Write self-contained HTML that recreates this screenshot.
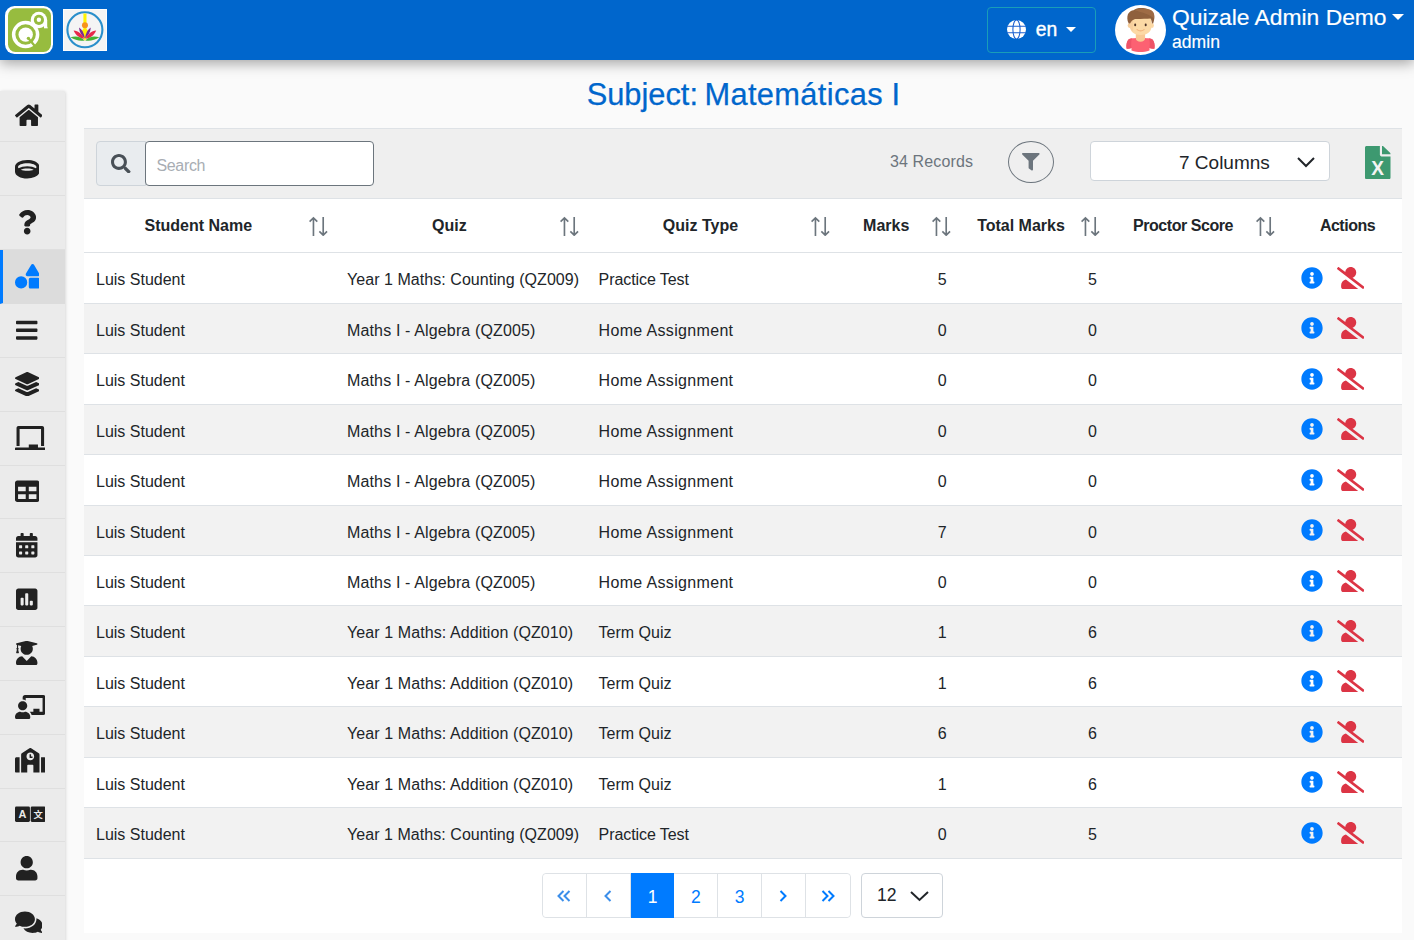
<!DOCTYPE html>
<html lang="en"><head><meta charset="utf-8"><title>Subject: Matemáticas I</title>
<style>
html,body{margin:0;padding:0}
body{width:1414px;height:940px;overflow:hidden;background:#fafafa;font-family:"Liberation Sans",sans-serif;color:#212529;position:relative}
#header{position:absolute;left:0;top:0;width:1414px;height:60px;background:#0066cc;box-shadow:0 3px 13px rgba(0,0,0,.37);color:#fff}
.logo1{position:absolute;left:5px;top:6px;width:48px;height:48px}
.logo2{position:absolute;left:63px;top:9px;width:44px;height:42px}
.lang{position:absolute;left:987px;top:7px;width:109px;height:45.600px;border:1px solid #199db8;border-radius:4px;box-sizing:border-box}
.lang svg{position:absolute;left:19px;top:12.200px}
.lang span{position:absolute;left:47.700px;top:10.100px;font-size:19.300px;line-height:24px;color:#fff;-webkit-text-stroke:.4px #fff}
.caret{display:inline-block;width:0;height:0;border-left:5.500px solid transparent;border-right:5.500px solid transparent;border-top:5.500px solid #fff}
.lang .caret{position:absolute;left:78px;top:19px;border-left-width:5.250px;border-right-width:5.250px;border-top-width:5.400px}
.avatar{position:absolute;left:1115px;top:5px;width:51px;height:50px}
.uname{position:absolute;left:1172px;top:3px;font-size:22.850px;line-height:28px;white-space:nowrap;-webkit-text-stroke:.2px #fff}
.uname .caret{position:absolute;left:220px;top:10.800px;border-left-width:6.200px;border-right-width:6.200px;border-top-width:6.200px}
.urole{position:absolute;left:1172px;top:31px;font-size:17.600px;line-height:22px;-webkit-text-stroke:.15px #fff}
#title{position:absolute;left:586.700px;top:75.200px;margin:0;white-space:nowrap;font-weight:normal;font-size:30.800px;line-height:40px;color:#0066cc;-webkit-text-stroke:.25px #0066cc}
#sidebar{position:absolute;left:0;top:91px;width:65px;height:860px;background:#ebebeb;border-top-right-radius:3px;box-shadow:1px 0 3px rgba(0,0,0,.12)}
.sitem{position:absolute;left:0;width:65px;height:53.85px;box-sizing:border-box;border-bottom:1px solid #dfdfdf}
.sitem.active{background:#dcdcdc;border-left:3px solid #007bff;border-bottom-color:#dcdcdc;height:53.400px}
.sicon{position:absolute;color:#212121;line-height:0}
.sicon.act{color:#007bff}
#card{position:absolute;left:84px;top:128px;width:1318px;height:805px;background:#fff}
#toolbar{position:absolute;left:0;top:0;width:1318px;height:71px;background:#efefef;border-top:1px solid #dee2e6;border-bottom:1px solid #dee2e6;box-sizing:border-box}
#thead{position:absolute;left:0;top:71px;width:1318px;height:54px;border-bottom:1px solid #dee2e6;box-sizing:border-box}
#tbl{position:absolute;left:0;top:0;width:1414px;height:940px}
.addon{position:absolute;left:96px;top:141px;width:50px;height:45px;box-sizing:border-box;background:#e9ecef;border:1px solid #ced4da;border-radius:4px 0 0 4px;display:flex;align-items:center;justify-content:center}
.search{position:absolute;left:145px;top:141px;width:229px;height:45px;box-sizing:border-box;background:#fff;border:1px solid #6c757d;border-radius:4px}
.search span{position:absolute;left:10.500px;top:13.700px;font-size:16px;line-height:20px;color:#a8adb3;letter-spacing:-.35px}
.records{position:absolute;left:890px;top:151px;font-size:16px;line-height:22px;color:#6c757d;white-space:nowrap;letter-spacing:.12px}
.fbtn{position:absolute;left:1008px;top:141px;width:46px;height:42px;box-sizing:border-box;border:1px solid #6c757d;border-radius:50%;display:flex;align-items:center;justify-content:center}
.cols{position:absolute;left:1090px;top:141px;width:240px;height:40px;box-sizing:border-box;background:#fff;border:1px solid #ced4da;border-radius:4px}
.cols .lbl{position:absolute;left:88px;top:9.500px;font-size:19px;line-height:22px;color:#212529}
.cols .chev{position:absolute;left:205px;top:14px}
.excel{position:absolute;left:1365.300px;top:145.700px;line-height:0}
.th{position:absolute;top:215px;transform:translateX(-50%);font-weight:bold;font-size:16px;line-height:22px;white-space:nowrap;color:#212529}
.sorti{position:absolute;top:216px;width:20px;height:20px}
.row{position:absolute;left:84px;width:1318px;height:50.450px;box-sizing:border-box;border-bottom:1px solid #dee2e6;background:#fff}
.row.even{background:#f2f2f2}
.c{position:absolute;top:16px;font-size:16px;line-height:22px;white-space:nowrap;color:#212529}
.c1{left:12px}.c2{left:263px}.c3{left:514.600px}
.c4{left:848.300px;width:20px;text-align:center}.c5{left:998.500px;width:20px;text-align:center}
.ic{position:absolute}
.info{left:1216.700px;top:13.600px;color:#007bff}
.uslash{left:1252.600px;top:13.600px;color:#dc3545}
#pager{position:absolute;left:542px;top:873px;height:45px;display:flex;border:1px solid #dee2e6;border-radius:4px;box-sizing:border-box}
.pg{width:43.800px;height:43px;box-sizing:border-box;border-right:1px solid #dee2e6;display:flex;align-items:center;justify-content:center;color:#007bff;font-size:17.500px;background:#fff;padding-top:3px}
.pg svg{margin-top:-3px}
.pg.last{border-right:0}
.pg.cur{background:#007bff;color:#fff;height:45px;margin-top:-1px;border-right:0;padding-top:4px}
.rpp{position:absolute;left:861px;top:873px;width:82px;height:45px;box-sizing:border-box;border:1px solid #ced4da;border-radius:4px;background:#fff}
.rpp span{position:absolute;left:15px;top:10px;font-size:17.600px;line-height:22px;color:#212529}
.rpp svg{position:absolute;left:47px;top:15.500px}

.pg.first{border-radius:4px 0 0 4px}.pg.last{border-radius:0 4px 4px 0}
.q1{letter-spacing:.05px}.q2{letter-spacing:.145px}.q3{letter-spacing:.09px}
.t1{letter-spacing:-.08px}.t2{letter-spacing:.33px}
.h6{letter-spacing:-.45px}.h7{letter-spacing:-.5px}

.w1{margin-right:-2.100px}.w2{letter-spacing:.36px}

</style></head>
<body>
<div id="sidebar"></div>
<div class="sitem" style="top:88.60px"></div><div class="sicon" style="left:14.70px;top:102.80px"><svg viewBox="0 0 576 512" width="27.5625" height="24.5" style=""><path fill="currentColor" d="M280.37 148.26L96 300.11V464a16 16 0 0 0 16 16l112.06-.29a16 16 0 0 0 15.92-16V368a16 16 0 0 1 16-16h64a16 16 0 0 1 16 16v95.64a16 16 0 0 0 16 16.05L464 480a16 16 0 0 0 16-16V300L295.67 148.26a12.19 12.19 0 0 0-15.3 0zM571.6 251.47L488 182.56V44.05a12 12 0 0 0-12-12h-56a12 12 0 0 0-12 12v72.61L318.47 43a48 48 0 0 0-61 0L4.34 251.47a12 12 0 0 0-1.6 16.9l25.5 31A12 12 0 0 0 45.15 301l235.22-193.74a12.19 12.19 0 0 1 15.3 0L530.9 301a12 12 0 0 0 16.9-1.6l25.5-31a12 12 0 0 0-1.7-16.93z"/></svg></div>
<div class="sitem" style="top:142.45px"></div><div class="sicon" style="left:14.70px;top:156.60px"><svg viewBox="0 0 512 512" width="24.5" height="24.5" style=""><path fill="currentColor" d="M256 64C110.06 64 0 125.91 0 208v98.130C0 384.480 114.620 448 256 448s256-63.520 256-141.870V208c0-82.090-110.060-144-256-144zm0 64c106.040 0 192 35.820 192 80 0 9.260-3.970 18.120-10.910 26.390C392.150 208.210 328.230 192 256 192s-136.150 16.210-181.090 42.390C67.970 226.120 64 217.260 64 208c0-44.180 85.960-80 192-80zM120.430 264.640C155.040 249.930 201.640 240 256 240s100.960 9.930 135.570 24.640C356.840 279.070 308.930 288 256 288s-100.840-8.930-135.570-23.360z"/></svg></div>
<div class="sitem" style="top:196.30px"></div><div class="sicon" style="left:17.76px;top:210.40px"><svg viewBox="0 0 384 512" width="18.375" height="24.5" style=""><path fill="currentColor" d="M202.021 0C122.202 0 70.503 32.703 29.914 91.026c-7.363 10.580-5.093 25.086 5.178 32.874l43.138 32.709c10.373 7.865 25.132 6.026 33.253-4.148 25.049-31.381 43.630-49.449 82.757-49.449 30.764 0 68.816 19.799 68.816 49.631 0 22.552-18.617 34.134-48.993 51.164-35.423 19.860-82.299 44.576-82.299 106.405V320c0 13.255 10.745 24 24 24h72.471c13.255 0 24-10.745 24-24v-5.773c0-42.860 125.268-44.645 125.268-160.627C377.504 66.256 286.902 0 202.021 0zM192 373.459c-38.196 0-69.271 31.075-69.271 69.271 0 38.195 31.075 69.270 69.271 69.270s69.271-31.075 69.271-69.271-31.075-69.270-69.271-69.270z"/></svg></div>
<div class="sitem active" style="top:250.15px"></div><div class="sicon act" style="left:14.70px;top:264.20px"><svg viewBox="0 0 512 512" width="24.5" height="24.5" style=""><path fill="currentColor" d="M128,256A128,128,0,1,0,256,384,128,128,0,0,0,128,256Zm379-54.860L400.070,18.290a37.260,37.260,0,0,0-64.140,0L229,201.140C214.760,225.520,232.580,256,261.090,256H474.910C503.420,256,521.240,225.520,507,201.140ZM480,288H320a32,32,0,0,0-32,32V480a32,32,0,0,0,32,32H480a32,32,0,0,0,32-32V320A32,32,0,0,0,480,288Z"/></svg></div>
<div class="sitem" style="top:304.00px"></div><div class="sicon" style="left:16.23px;top:318.00px"><svg viewBox="0 0 448 512" width="21.4375" height="24.5" style=""><path fill="currentColor" d="M16 132h416c8.837 0 16-7.163 16-16V76c0-8.837-7.163-16-16-16H16C7.163 60 0 67.163 0 76v40c0 8.837 7.163 16 16 16zm0 160h416c8.837 0 16-7.163 16-16v-40c0-8.837-7.163-16-16-16H16c-8.837 0-16 7.163-16 16v40c0 8.837 7.163 16 16 16zm0 160h416c8.837 0 16-7.163 16-16v-40c0-8.837-7.163-16-16-16H16c-8.837 0-16 7.163-16 16v40c0 8.837 7.163 16 16 16z"/></svg></div>
<div class="sitem" style="top:357.85px"></div><div class="sicon" style="left:14.70px;top:371.80px"><svg viewBox="0 0 512 512" width="24.5" height="24.5" style=""><path fill="currentColor" d="M12.410 148.020l232.940 105.670c6.800 3.090 14.490 3.090 21.290 0l232.940-105.670c16.550-7.510 16.550-32.520 0-40.030L266.650 2.310a25.607 25.607 0 0 0-21.290 0L12.410 107.980c-16.550 7.510-16.550 32.530 0 40.040zm487.180 88.280l-58.090-26.330-161.640 73.270c-7.560 3.430-15.590 5.170-23.860 5.170s-16.290-1.740-23.860-5.170L70.510 209.970l-58.100 26.330c-16.550 7.500-16.550 32.500 0 40l232.940 105.590c6.800 3.080 14.490 3.080 21.290 0L499.590 276.300c16.550-7.500 16.550-32.500 0-40zm0 127.800l-57.870-26.230-161.860 73.370c-7.560 3.430-15.590 5.170-23.860 5.170s-16.290-1.740-23.860-5.170L70.290 337.870 12.410 364.100c-16.550 7.500-16.550 32.500 0 40l232.940 105.590c6.800 3.080 14.490 3.080 21.290 0L499.590 404.100c16.550-7.500 16.550-32.500 0-40z"/></svg></div>
<div class="sitem" style="top:411.70px"></div><div class="sicon" style="left:14.70px;top:425.60px"><svg viewBox="0 0 640 512" width="30.625" height="24.5" style=""><path fill="currentColor" d="M96 64h448v352h64V40c0-22.060-17.940-40-40-40H72C49.940 0 32 17.940 32 40v376h64V64zm528 384H480v-64H288v64H16c-8.840 0-16 7.160-16 16v32c0 8.840 7.160 16 16 16h608c8.840 0 16-7.160 16-16v-32c0-8.840-7.160-16-16-16z"/></svg></div>
<div class="sitem" style="top:465.55px"></div><div class="sicon" style="left:14.70px;top:479.40px"><svg viewBox="0 0 512 512" width="24.5" height="24.5" style=""><path fill="currentColor" d="M464 32H48C21.490 32 0 53.490 0 80v352c0 26.510 21.490 48 48 48h416c26.510 0 48-21.490 48-48V80c0-26.510-21.490-48-48-48zM224 416H64v-96h160v96zm0-160H64v-96h160v96zm224 160H288v-96h160v96zm0-160H288v-96h160v96z"/></svg></div>
<div class="sitem" style="top:519.40px"></div><div class="sicon" style="left:16.23px;top:533.20px"><svg viewBox="0 0 448 512" width="21.4375" height="24.5" style=""><path fill="currentColor" d="M0 464c0 26.500 21.500 48 48 48h352c26.500 0 48-21.500 48-48V192H0v272zm320-196c0-6.600 5.400-12 12-12h40c6.600 0 12 5.400 12 12v40c0 6.600-5.400 12-12 12h-40c-6.600 0-12-5.400-12-12v-40zm0 128c0-6.600 5.400-12 12-12h40c6.600 0 12 5.400 12 12v40c0 6.600-5.400 12-12 12h-40c-6.600 0-12-5.400-12-12v-40zM192 268c0-6.600 5.400-12 12-12h40c6.600 0 12 5.400 12 12v40c0 6.600-5.400 12-12 12h-40c-6.600 0-12-5.400-12-12v-40zm0 128c0-6.600 5.400-12 12-12h40c6.600 0 12 5.400 12 12v40c0 6.600-5.400 12-12 12h-40c-6.600 0-12-5.400-12-12v-40zM64 268c0-6.600 5.400-12 12-12h40c6.600 0 12 5.400 12 12v40c0 6.600-5.400 12-12 12H76c-6.600 0-12-5.400-12-12v-40zm0 128c0-6.600 5.400-12 12-12h40c6.600 0 12 5.400 12 12v40c0 6.600-5.400 12-12 12H76c-6.600 0-12-5.400-12-12v-40zM400 64h-48V16c0-8.800-7.200-16-16-16h-32c-8.800 0-16 7.200-16 16v48H160V16c0-8.800-7.200-16-16-16h-32c-8.800 0-16 7.200-16 16v48H48C21.500 64 0 85.500 0 112v48h448v-48c0-26.500-21.500-48-48-48z"/></svg></div>
<div class="sitem" style="top:573.25px"></div><div class="sicon" style="left:16.23px;top:587.00px"><svg viewBox="0 0 448 512" width="21.4375" height="24.5" style=""><path fill="currentColor" d="M400 32H48C21.500 32 0 53.500 0 80v352c0 26.500 21.500 48 48 48h352c26.500 0 48-21.500 48-48V80c0-26.500-21.500-48-48-48zM160 368c0 8.840-7.160 16-16 16h-32c-8.840 0-16-7.160-16-16V240c0-8.840 7.160-16 16-16h32c8.840 0 16 7.160 16 16v128zm96 0c0 8.840-7.160 16-16 16h-32c-8.840 0-16-7.160-16-16V144c0-8.840 7.160-16 16-16h32c8.840 0 16 7.160 16 16v224zm96 0c0 8.840-7.160 16-16 16h-32c-8.840 0-16-7.160-16-16v-64c0-8.840 7.160-16 16-16h32c8.840 0 16 7.160 16 16v64z"/></svg></div>
<div class="sitem" style="top:627.10px"></div><div class="sicon" style="left:16.23px;top:640.80px"><svg viewBox="0 0 448 512" width="21.4375" height="24.5" style=""><path fill="currentColor" d="M319.400 320.600L224 416l-95.400-95.400C57.100 323.700 0 382.200 0 454.400v9.600c0 26.500 21.500 48 48 48h352c26.500 0 48-21.500 48-48v-9.600c0-72.200-57.100-130.700-128.600-133.800zM13.600 79.800l6.400 1.500v58.400c-7 4.200-12 11.500-12 20.300 0 8.400 4.600 15.400 11.100 19.700L3.500 242c-1.700 6.900 2.100 14 7.600 14h41.800c5.500 0 9.300-7.100 7.600-14l-15.600-62.300C51.400 175.400 56 168.400 56 160c0-8.800-5-16.100-12-20.300V87.100l66 15.900c-8.600 17.200-14 36.400-14 57 0 70.700 57.300 128 128 128s128-57.300 128-128c0-20.600-5.300-39.800-14-57l96.300-23.200c18.200-4.400 18.200-27.100 0-31.500l-190.400-46c-13-3.100-26.700-3.100-39.700 0L13.600 48.200c-18.100 4.400-18.100 27.200 0 31.600z"/></svg></div>
<div class="sitem" style="top:680.95px"></div><div class="sicon" style="left:14.70px;top:694.60px"><svg viewBox="0 0 640 512" width="30.625" height="24.5" style=""><path fill="currentColor" d="M208 352c-2.390 0-4.780.350-7.060 1.090C187.980 357.300 174.350 360 160 360c-14.350 0-27.980-2.700-40.950-6.910-2.280-.740-4.660-1.090-7.050-1.090C49.940 352-.330 402.480 0 464.620.140 490.880 21.730 512 48 512h224c26.270 0 47.860-21.120 48-47.380.330-62.140-49.940-112.620-112-112.620zm-48-32c53.020 0 96-42.980 96-96s-42.980-96-96-96-96 42.980-96 96 42.980 96 96 96zM592 0H208c-26.470 0-48 22.250-48 49.590V96c23.420 0 45.100 6.780 64 17.800V64h352v288h-64v-64H384v64h-76.240c19.100 16.690 33.120 38.730 39.690 64H592c26.470 0 48-22.250 48-49.590V49.590C640 22.250 618.470 0 592 0z"/></svg></div>
<div class="sitem" style="top:734.80px"></div><div class="sicon" style="left:14.70px;top:748.40px"><svg viewBox="0 0 640 512" width="30.625" height="24.5" style=""><path fill="currentColor" d="M0 224v272c0 8.840 7.160 16 16 16h80V192H32c-17.670 0-32 14.330-32 32zm360-48h-24v-40c0-4.420-3.580-8-8-8h-16c-4.420 0-8 3.580-8 8v64c0 4.420 3.580 8 8 8h48c4.420 0 8-3.580 8-8v-16c0-4.420-3.580-8-8-8zm137.750-63.960l-160-106.670a32.020 32.020 0 0 0-35.500 0l-160 106.670A32.002 32.002 0 0 0 128 138.660V512h128V368c0-8.840 7.160-16 16-16h96c8.840 0 16 7.160 16 16v144h128V138.670c0-10.700-5.350-20.700-14.250-26.630zM320 256c-44.180 0-80-35.820-80-80s35.820-80 80-80 80 35.820 80 80-35.820 80-80 80zm288-64h-64v320h80c8.840 0 16-7.160 16-16V224c0-17.670-14.330-32-32-32z"/></svg></div>
<div class="sitem" style="top:788.65px"></div><div class="sicon" style="left:14.70px;top:802.20px"><svg viewBox="0 0 640 512" width="30.625" height="24.5"><rect x="0" y="96" width="312" height="320" rx="28" fill="#212121"/><rect x="328" y="96" width="312" height="320" rx="28" fill="#212121"/><text x="156" y="338" font-family="Liberation Sans, sans-serif" font-weight="bold" font-size="228" fill="#ebebeb" text-anchor="middle">A</text><text x="484" y="328" font-family="Noto Sans CJK SC, sans-serif" font-weight="bold" font-size="195" fill="#ebebeb" text-anchor="middle">文</text></svg></div>
<div class="sitem" style="top:842.50px"></div><div class="sicon" style="left:16.23px;top:856.00px"><svg viewBox="0 0 448 512" width="21.4375" height="24.5" style=""><path fill="currentColor" d="M224 256c70.700 0 128-57.300 128-128S294.700 0 224 0 96 57.300 96 128s57.300 128 128 128zm89.600 32h-16.700c-22.200 10.200-46.900 16-72.900 16s-50.600-5.800-72.900-16h-16.700C60.200 288 0 348.200 0 422.400V464c0 26.500 21.500 48 48 48h352c26.500 0 48-21.500 48-48v-41.600c0-74.200-60.200-134.400-134.400-134.400z"/></svg></div>
<div class="sitem" style="top:896.35px"></div><div class="sicon" style="left:14.70px;top:909.80px"><svg viewBox="0 0 576 512" width="27.5625" height="24.5" style=""><path fill="currentColor" d="M416 192c0-88.400-93.100-160-208-160S0 103.600 0 192c0 34.300 14.100 65.900 38 92-13.400 30.200-35.500 54.200-35.800 54.500-2.200 2.300-2.800 5.700-1.500 8.700S4.800 352 8 352c36.600 0 66.900-12.300 88.700-25 32.200 15.700 70.300 25 111.300 25 114.900 0 208-71.600 208-160zm122 220c23.900-26 38-57.700 38-92 0-66.900-53.500-124.200-129.300-148.100.900 6.600 1.300 13.300 1.300 20.100 0 105.900-107.700 192-240 192-10.800 0-21.300-.800-31.700-1.900C207.800 439.600 281.800 480 368 480c41 0 79.100-9.200 111.300-25 21.800 12.700 52.100 25 88.700 25 3.200 0 6.100-1.900 7.300-4.800 1.300-2.900.700-6.300-1.500-8.700-.300-.300-22.400-24.200-35.800-54.500z"/></svg></div>
<div id="card">
 <div id="toolbar"></div>
 <div id="thead"></div>
</div>
<div id="tbl">
<div class="addon"><svg viewBox="0 0 512 512" width="19.6" height="19.6" style=""><path fill="#495057" d="M505 442.7L405.3 343c-4.500-4.500-10.600-7-17-7H372c27.600-35.300 44-79.700 44-128C416 93.100 322.900 0 208 0S0 93.100 0 208s93.100 208 208 208c48.300 0 92.700-16.400 128-44v16.300c0 6.400 2.500 12.500 7 17l99.700 99.700c9.400 9.400 24.600 9.400 33.900 0l28.300-28.300c9.400-9.400 9.400-24.600.1-34zM208 336c-70.700 0-128-57.200-128-128 0-70.700 57.200-128 128-128 70.700 0 128 57.200 128 128 0 70.700-57.200 128-128 128z"/></svg></div>
<div class="search"><span>Search</span></div>
<div class="records">34 Records</div>
<div class="fbtn"><svg viewBox="0 0 512 512" width="17.6" height="17.6" style=""><path fill="#6c757d" d="M487.976 0H24.028C2.710 0-8.047 25.866 7.058 40.971L192 225.941V432c0 7.831 3.821 15.170 10.237 19.662l80 55.980C298.020 518.690 320 507.493 320 487.980V225.941l184.947-184.970C520.021 25.896 509.338 0 487.976 0z"/></svg></div>
<div class="cols"><span class="lbl">7 Columns</span><svg class="chev" viewBox="0 0 20 12" width="20" height="12"><path d="M2 2l8 8 8-8" fill="none" stroke="#212529" stroke-width="2"/></svg></div>
<div class="excel"><svg preserveAspectRatio="none" viewBox="0 0 384 512" width="25.5" height="33.3" style=""><path fill="#3d9970" d="M224 136V0H24C10.7 0 0 10.700 0 24v464c0 13.300 10.700 24 24 24h336c13.300 0 24-10.700 24-24V160H248c-13.200 0-24-10.800-24-24zM384 121.900v6.100H256V0h6.100c6.400 0 12.500 2.500 17 7l97.900 98c4.500 4.500 7 10.600 7 16.900z"/><text x="192" y="448" text-anchor="middle" textLength="192" lengthAdjust="spacingAndGlyphs" font-family="Liberation Sans, sans-serif" font-weight="bold" font-size="312" fill="#f4f4f4">X</text></svg></div>
<span class="th h1" style="left:198.3px">Student Name</span><span class="sorti" style="left:308.3px"><svg class="sort" viewBox="0 0 20 20" width="20" height="20"><g fill="none" stroke="#6c757d" stroke-width="1.650" stroke-linejoin="miter"><path d="M5.450 19.900V1.800M1.600 5.650L5.450 1.800 9.300 5.650"/><path d="M15.200 1.100v18.100M11.350 15.350l3.850 3.850 3.850-3.850"/></g></svg></span><span class="th h2" style="left:449.3px">Quiz</span><span class="sorti" style="left:559.3px"><svg class="sort" viewBox="0 0 20 20" width="20" height="20"><g fill="none" stroke="#6c757d" stroke-width="1.650" stroke-linejoin="miter"><path d="M5.450 19.900V1.800M1.600 5.650L5.450 1.800 9.300 5.650"/><path d="M15.200 1.100v18.100M11.350 15.350l3.850 3.850 3.850-3.850"/></g></svg></span><span class="th h3" style="left:700.5px">Quiz Type</span><span class="sorti" style="left:810.3px"><svg class="sort" viewBox="0 0 20 20" width="20" height="20"><g fill="none" stroke="#6c757d" stroke-width="1.650" stroke-linejoin="miter"><path d="M5.450 19.900V1.800M1.600 5.650L5.450 1.800 9.300 5.650"/><path d="M15.200 1.100v18.100M11.350 15.350l3.850 3.850 3.850-3.850"/></g></svg></span><span class="th h4" style="left:886.2px">Marks</span><span class="sorti" style="left:930.9px"><svg class="sort" viewBox="0 0 20 20" width="20" height="20"><g fill="none" stroke="#6c757d" stroke-width="1.650" stroke-linejoin="miter"><path d="M5.450 19.900V1.800M1.600 5.650L5.450 1.800 9.300 5.650"/><path d="M15.200 1.100v18.100M11.350 15.350l3.850 3.850 3.850-3.850"/></g></svg></span><span class="th h5" style="left:1021px">Total Marks</span><span class="sorti" style="left:1080.1px"><svg class="sort" viewBox="0 0 20 20" width="20" height="20"><g fill="none" stroke="#6c757d" stroke-width="1.650" stroke-linejoin="miter"><path d="M5.450 19.900V1.800M1.600 5.650L5.450 1.800 9.300 5.650"/><path d="M15.200 1.100v18.100M11.350 15.350l3.850 3.850 3.850-3.850"/></g></svg></span><span class="th h6" style="left:1183px">Proctor Score</span><span class="sorti" style="left:1254.7px"><svg class="sort" viewBox="0 0 20 20" width="20" height="20"><g fill="none" stroke="#6c757d" stroke-width="1.650" stroke-linejoin="miter"><path d="M5.450 19.900V1.800M1.600 5.650L5.450 1.800 9.300 5.650"/><path d="M15.200 1.100v18.100M11.350 15.350l3.850 3.850 3.850-3.850"/></g></svg></span><span class="th h7" style="left:1347.5px">Actions</span>
<div class="row" style="top:253.30px"><span class="c c1">Luis Student</span><span class="c c2 q1">Year 1 Maths: Counting (QZ009)</span><span class="c c3 t1">Practice Test</span><span class="c c4">5</span><span class="c c5">5</span><span class="ic info"><svg viewBox="0 0 512 512" width="22" height="22" style=""><path fill="currentColor" d="M256 8C119.043 8 8 119.083 8 256c0 136.997 111.043 248 248 248s248-111.003 248-248C504 119.083 392.957 8 256 8zm0 110c23.196 0 42 18.804 42 42s-18.804 42-42 42-42-18.804-42-42 18.804-42 42-42zm56 254c0 6.627-5.373 12-12 12h-88c-6.627 0-12-5.373-12-12v-24c0-6.627 5.373-12 12-12h12v-64h-12c-6.627 0-12-5.373-12-12v-24c0-6.627 5.373-12 12-12h64c6.627 0 12 5.373 12 12v100h12c6.627 0 12 5.373 12 12v24z"/></svg></span><span class="ic uslash"><svg viewBox="0 0 640 512" width="27.5" height="22" style=""><path fill="currentColor" d="M633.8 458.1L362.3 248.3C412.1 230.7 448 183.800 448 128 448 57.300 390.700 0 320 0c-67.100 0-121.500 51.800-126.900 117.400L45.500 3.400C38.500-2 28.500-.8 23 6.200L3.400 31.400c-5.400 7-4.200 17 2.800 22.400l588.400 454.700c7 5.400 17 4.200 22.500-2.800l19.600-25.300c5.400-6.800 4.100-16.900-2.900-22.300zM96 422.400V464c0 26.500 21.500 48 48 48h350.200L207.400 290.300C144.200 301.300 96 356 96 422.400z"/></svg></span></div>
<div class="row even" style="top:303.75px"><span class="c c1">Luis Student</span><span class="c c2 q2">Maths I - Algebra (QZ005)</span><span class="c c3 t2">Home Assignment</span><span class="c c4">0</span><span class="c c5">0</span><span class="ic info"><svg viewBox="0 0 512 512" width="22" height="22" style=""><path fill="currentColor" d="M256 8C119.043 8 8 119.083 8 256c0 136.997 111.043 248 248 248s248-111.003 248-248C504 119.083 392.957 8 256 8zm0 110c23.196 0 42 18.804 42 42s-18.804 42-42 42-42-18.804-42-42 18.804-42 42-42zm56 254c0 6.627-5.373 12-12 12h-88c-6.627 0-12-5.373-12-12v-24c0-6.627 5.373-12 12-12h12v-64h-12c-6.627 0-12-5.373-12-12v-24c0-6.627 5.373-12 12-12h64c6.627 0 12 5.373 12 12v100h12c6.627 0 12 5.373 12 12v24z"/></svg></span><span class="ic uslash"><svg viewBox="0 0 640 512" width="27.5" height="22" style=""><path fill="currentColor" d="M633.8 458.1L362.3 248.3C412.1 230.7 448 183.800 448 128 448 57.300 390.700 0 320 0c-67.100 0-121.500 51.800-126.900 117.400L45.500 3.400C38.500-2 28.500-.8 23 6.200L3.400 31.400c-5.400 7-4.200 17 2.800 22.400l588.400 454.700c7 5.400 17 4.200 22.500-2.800l19.600-25.300c5.400-6.800 4.100-16.900-2.900-22.300zM96 422.400V464c0 26.500 21.500 48 48 48h350.200L207.400 290.300C144.200 301.300 96 356 96 422.400z"/></svg></span></div>
<div class="row" style="top:354.20px"><span class="c c1">Luis Student</span><span class="c c2 q2">Maths I - Algebra (QZ005)</span><span class="c c3 t2">Home Assignment</span><span class="c c4">0</span><span class="c c5">0</span><span class="ic info"><svg viewBox="0 0 512 512" width="22" height="22" style=""><path fill="currentColor" d="M256 8C119.043 8 8 119.083 8 256c0 136.997 111.043 248 248 248s248-111.003 248-248C504 119.083 392.957 8 256 8zm0 110c23.196 0 42 18.804 42 42s-18.804 42-42 42-42-18.804-42-42 18.804-42 42-42zm56 254c0 6.627-5.373 12-12 12h-88c-6.627 0-12-5.373-12-12v-24c0-6.627 5.373-12 12-12h12v-64h-12c-6.627 0-12-5.373-12-12v-24c0-6.627 5.373-12 12-12h64c6.627 0 12 5.373 12 12v100h12c6.627 0 12 5.373 12 12v24z"/></svg></span><span class="ic uslash"><svg viewBox="0 0 640 512" width="27.5" height="22" style=""><path fill="currentColor" d="M633.8 458.1L362.3 248.3C412.1 230.7 448 183.800 448 128 448 57.300 390.700 0 320 0c-67.100 0-121.500 51.800-126.900 117.400L45.500 3.400C38.500-2 28.500-.8 23 6.200L3.400 31.400c-5.400 7-4.200 17 2.800 22.400l588.400 454.700c7 5.400 17 4.200 22.500-2.800l19.600-25.300c5.400-6.800 4.100-16.900-2.900-22.300zM96 422.400V464c0 26.500 21.500 48 48 48h350.200L207.400 290.300C144.200 301.300 96 356 96 422.400z"/></svg></span></div>
<div class="row even" style="top:404.65px"><span class="c c1">Luis Student</span><span class="c c2 q2">Maths I - Algebra (QZ005)</span><span class="c c3 t2">Home Assignment</span><span class="c c4">0</span><span class="c c5">0</span><span class="ic info"><svg viewBox="0 0 512 512" width="22" height="22" style=""><path fill="currentColor" d="M256 8C119.043 8 8 119.083 8 256c0 136.997 111.043 248 248 248s248-111.003 248-248C504 119.083 392.957 8 256 8zm0 110c23.196 0 42 18.804 42 42s-18.804 42-42 42-42-18.804-42-42 18.804-42 42-42zm56 254c0 6.627-5.373 12-12 12h-88c-6.627 0-12-5.373-12-12v-24c0-6.627 5.373-12 12-12h12v-64h-12c-6.627 0-12-5.373-12-12v-24c0-6.627 5.373-12 12-12h64c6.627 0 12 5.373 12 12v100h12c6.627 0 12 5.373 12 12v24z"/></svg></span><span class="ic uslash"><svg viewBox="0 0 640 512" width="27.5" height="22" style=""><path fill="currentColor" d="M633.8 458.1L362.3 248.3C412.1 230.7 448 183.800 448 128 448 57.300 390.700 0 320 0c-67.100 0-121.500 51.800-126.900 117.400L45.500 3.400C38.500-2 28.500-.8 23 6.200L3.400 31.400c-5.400 7-4.200 17 2.800 22.400l588.400 454.700c7 5.400 17 4.200 22.500-2.800l19.600-25.300c5.400-6.800 4.100-16.900-2.900-22.300zM96 422.400V464c0 26.500 21.500 48 48 48h350.200L207.400 290.300C144.200 301.300 96 356 96 422.400z"/></svg></span></div>
<div class="row" style="top:455.10px"><span class="c c1">Luis Student</span><span class="c c2 q2">Maths I - Algebra (QZ005)</span><span class="c c3 t2">Home Assignment</span><span class="c c4">0</span><span class="c c5">0</span><span class="ic info"><svg viewBox="0 0 512 512" width="22" height="22" style=""><path fill="currentColor" d="M256 8C119.043 8 8 119.083 8 256c0 136.997 111.043 248 248 248s248-111.003 248-248C504 119.083 392.957 8 256 8zm0 110c23.196 0 42 18.804 42 42s-18.804 42-42 42-42-18.804-42-42 18.804-42 42-42zm56 254c0 6.627-5.373 12-12 12h-88c-6.627 0-12-5.373-12-12v-24c0-6.627 5.373-12 12-12h12v-64h-12c-6.627 0-12-5.373-12-12v-24c0-6.627 5.373-12 12-12h64c6.627 0 12 5.373 12 12v100h12c6.627 0 12 5.373 12 12v24z"/></svg></span><span class="ic uslash"><svg viewBox="0 0 640 512" width="27.5" height="22" style=""><path fill="currentColor" d="M633.8 458.1L362.3 248.3C412.1 230.7 448 183.800 448 128 448 57.300 390.700 0 320 0c-67.100 0-121.500 51.800-126.900 117.400L45.500 3.400C38.500-2 28.500-.8 23 6.200L3.400 31.400c-5.400 7-4.200 17 2.800 22.400l588.400 454.700c7 5.400 17 4.200 22.500-2.800l19.600-25.300c5.400-6.800 4.100-16.900-2.900-22.300zM96 422.400V464c0 26.500 21.500 48 48 48h350.200L207.400 290.300C144.200 301.300 96 356 96 422.400z"/></svg></span></div>
<div class="row even" style="top:505.55px"><span class="c c1">Luis Student</span><span class="c c2 q2">Maths I - Algebra (QZ005)</span><span class="c c3 t2">Home Assignment</span><span class="c c4">7</span><span class="c c5">0</span><span class="ic info"><svg viewBox="0 0 512 512" width="22" height="22" style=""><path fill="currentColor" d="M256 8C119.043 8 8 119.083 8 256c0 136.997 111.043 248 248 248s248-111.003 248-248C504 119.083 392.957 8 256 8zm0 110c23.196 0 42 18.804 42 42s-18.804 42-42 42-42-18.804-42-42 18.804-42 42-42zm56 254c0 6.627-5.373 12-12 12h-88c-6.627 0-12-5.373-12-12v-24c0-6.627 5.373-12 12-12h12v-64h-12c-6.627 0-12-5.373-12-12v-24c0-6.627 5.373-12 12-12h64c6.627 0 12 5.373 12 12v100h12c6.627 0 12 5.373 12 12v24z"/></svg></span><span class="ic uslash"><svg viewBox="0 0 640 512" width="27.5" height="22" style=""><path fill="currentColor" d="M633.8 458.1L362.3 248.3C412.1 230.7 448 183.800 448 128 448 57.300 390.700 0 320 0c-67.100 0-121.500 51.800-126.900 117.400L45.500 3.400C38.500-2 28.500-.8 23 6.200L3.400 31.400c-5.400 7-4.200 17 2.800 22.400l588.400 454.700c7 5.400 17 4.200 22.500-2.800l19.600-25.300c5.400-6.800 4.100-16.900-2.900-22.300zM96 422.400V464c0 26.500 21.500 48 48 48h350.200L207.400 290.300C144.200 301.300 96 356 96 422.400z"/></svg></span></div>
<div class="row" style="top:556.00px"><span class="c c1">Luis Student</span><span class="c c2 q2">Maths I - Algebra (QZ005)</span><span class="c c3 t2">Home Assignment</span><span class="c c4">0</span><span class="c c5">0</span><span class="ic info"><svg viewBox="0 0 512 512" width="22" height="22" style=""><path fill="currentColor" d="M256 8C119.043 8 8 119.083 8 256c0 136.997 111.043 248 248 248s248-111.003 248-248C504 119.083 392.957 8 256 8zm0 110c23.196 0 42 18.804 42 42s-18.804 42-42 42-42-18.804-42-42 18.804-42 42-42zm56 254c0 6.627-5.373 12-12 12h-88c-6.627 0-12-5.373-12-12v-24c0-6.627 5.373-12 12-12h12v-64h-12c-6.627 0-12-5.373-12-12v-24c0-6.627 5.373-12 12-12h64c6.627 0 12 5.373 12 12v100h12c6.627 0 12 5.373 12 12v24z"/></svg></span><span class="ic uslash"><svg viewBox="0 0 640 512" width="27.5" height="22" style=""><path fill="currentColor" d="M633.8 458.1L362.3 248.3C412.1 230.7 448 183.800 448 128 448 57.300 390.700 0 320 0c-67.100 0-121.500 51.800-126.900 117.400L45.500 3.400C38.500-2 28.500-.8 23 6.200L3.400 31.400c-5.400 7-4.200 17 2.800 22.400l588.400 454.700c7 5.400 17 4.200 22.500-2.800l19.600-25.300c5.400-6.800 4.100-16.900-2.900-22.300zM96 422.400V464c0 26.500 21.500 48 48 48h350.200L207.400 290.300C144.200 301.300 96 356 96 422.400z"/></svg></span></div>
<div class="row even" style="top:606.45px"><span class="c c1">Luis Student</span><span class="c c2 q3">Year 1 Maths: Addition (QZ010)</span><span class="c c3 t3">Term Quiz</span><span class="c c4">1</span><span class="c c5">6</span><span class="ic info"><svg viewBox="0 0 512 512" width="22" height="22" style=""><path fill="currentColor" d="M256 8C119.043 8 8 119.083 8 256c0 136.997 111.043 248 248 248s248-111.003 248-248C504 119.083 392.957 8 256 8zm0 110c23.196 0 42 18.804 42 42s-18.804 42-42 42-42-18.804-42-42 18.804-42 42-42zm56 254c0 6.627-5.373 12-12 12h-88c-6.627 0-12-5.373-12-12v-24c0-6.627 5.373-12 12-12h12v-64h-12c-6.627 0-12-5.373-12-12v-24c0-6.627 5.373-12 12-12h64c6.627 0 12 5.373 12 12v100h12c6.627 0 12 5.373 12 12v24z"/></svg></span><span class="ic uslash"><svg viewBox="0 0 640 512" width="27.5" height="22" style=""><path fill="currentColor" d="M633.8 458.1L362.3 248.3C412.1 230.7 448 183.800 448 128 448 57.300 390.700 0 320 0c-67.100 0-121.500 51.800-126.900 117.400L45.500 3.400C38.500-2 28.500-.8 23 6.200L3.400 31.400c-5.400 7-4.200 17 2.800 22.400l588.400 454.700c7 5.400 17 4.200 22.500-2.800l19.600-25.300c5.400-6.800 4.100-16.900-2.900-22.300zM96 422.400V464c0 26.500 21.500 48 48 48h350.200L207.400 290.300C144.200 301.300 96 356 96 422.400z"/></svg></span></div>
<div class="row" style="top:656.90px"><span class="c c1">Luis Student</span><span class="c c2 q3">Year 1 Maths: Addition (QZ010)</span><span class="c c3 t3">Term Quiz</span><span class="c c4">1</span><span class="c c5">6</span><span class="ic info"><svg viewBox="0 0 512 512" width="22" height="22" style=""><path fill="currentColor" d="M256 8C119.043 8 8 119.083 8 256c0 136.997 111.043 248 248 248s248-111.003 248-248C504 119.083 392.957 8 256 8zm0 110c23.196 0 42 18.804 42 42s-18.804 42-42 42-42-18.804-42-42 18.804-42 42-42zm56 254c0 6.627-5.373 12-12 12h-88c-6.627 0-12-5.373-12-12v-24c0-6.627 5.373-12 12-12h12v-64h-12c-6.627 0-12-5.373-12-12v-24c0-6.627 5.373-12 12-12h64c6.627 0 12 5.373 12 12v100h12c6.627 0 12 5.373 12 12v24z"/></svg></span><span class="ic uslash"><svg viewBox="0 0 640 512" width="27.5" height="22" style=""><path fill="currentColor" d="M633.8 458.1L362.3 248.3C412.1 230.7 448 183.800 448 128 448 57.300 390.700 0 320 0c-67.100 0-121.500 51.800-126.900 117.400L45.500 3.400C38.500-2 28.500-.8 23 6.200L3.400 31.400c-5.400 7-4.200 17 2.800 22.400l588.400 454.700c7 5.400 17 4.200 22.500-2.800l19.600-25.300c5.400-6.800 4.100-16.900-2.900-22.300zM96 422.400V464c0 26.500 21.500 48 48 48h350.200L207.400 290.300C144.200 301.300 96 356 96 422.400z"/></svg></span></div>
<div class="row even" style="top:707.35px"><span class="c c1">Luis Student</span><span class="c c2 q3">Year 1 Maths: Addition (QZ010)</span><span class="c c3 t3">Term Quiz</span><span class="c c4">6</span><span class="c c5">6</span><span class="ic info"><svg viewBox="0 0 512 512" width="22" height="22" style=""><path fill="currentColor" d="M256 8C119.043 8 8 119.083 8 256c0 136.997 111.043 248 248 248s248-111.003 248-248C504 119.083 392.957 8 256 8zm0 110c23.196 0 42 18.804 42 42s-18.804 42-42 42-42-18.804-42-42 18.804-42 42-42zm56 254c0 6.627-5.373 12-12 12h-88c-6.627 0-12-5.373-12-12v-24c0-6.627 5.373-12 12-12h12v-64h-12c-6.627 0-12-5.373-12-12v-24c0-6.627 5.373-12 12-12h64c6.627 0 12 5.373 12 12v100h12c6.627 0 12 5.373 12 12v24z"/></svg></span><span class="ic uslash"><svg viewBox="0 0 640 512" width="27.5" height="22" style=""><path fill="currentColor" d="M633.8 458.1L362.3 248.3C412.1 230.7 448 183.800 448 128 448 57.300 390.700 0 320 0c-67.100 0-121.500 51.800-126.900 117.400L45.500 3.400C38.500-2 28.500-.8 23 6.200L3.400 31.400c-5.400 7-4.200 17 2.800 22.400l588.400 454.700c7 5.400 17 4.200 22.500-2.800l19.600-25.300c5.400-6.800 4.100-16.900-2.900-22.300zM96 422.400V464c0 26.500 21.500 48 48 48h350.200L207.400 290.300C144.200 301.300 96 356 96 422.400z"/></svg></span></div>
<div class="row" style="top:757.80px"><span class="c c1">Luis Student</span><span class="c c2 q3">Year 1 Maths: Addition (QZ010)</span><span class="c c3 t3">Term Quiz</span><span class="c c4">1</span><span class="c c5">6</span><span class="ic info"><svg viewBox="0 0 512 512" width="22" height="22" style=""><path fill="currentColor" d="M256 8C119.043 8 8 119.083 8 256c0 136.997 111.043 248 248 248s248-111.003 248-248C504 119.083 392.957 8 256 8zm0 110c23.196 0 42 18.804 42 42s-18.804 42-42 42-42-18.804-42-42 18.804-42 42-42zm56 254c0 6.627-5.373 12-12 12h-88c-6.627 0-12-5.373-12-12v-24c0-6.627 5.373-12 12-12h12v-64h-12c-6.627 0-12-5.373-12-12v-24c0-6.627 5.373-12 12-12h64c6.627 0 12 5.373 12 12v100h12c6.627 0 12 5.373 12 12v24z"/></svg></span><span class="ic uslash"><svg viewBox="0 0 640 512" width="27.5" height="22" style=""><path fill="currentColor" d="M633.8 458.1L362.3 248.3C412.1 230.7 448 183.800 448 128 448 57.300 390.700 0 320 0c-67.100 0-121.500 51.800-126.900 117.400L45.500 3.400C38.500-2 28.500-.8 23 6.200L3.400 31.400c-5.400 7-4.200 17 2.800 22.400l588.400 454.700c7 5.400 17 4.200 22.500-2.800l19.600-25.300c5.400-6.800 4.100-16.900-2.900-22.300zM96 422.400V464c0 26.500 21.500 48 48 48h350.200L207.400 290.300C144.200 301.300 96 356 96 422.400z"/></svg></span></div>
<div class="row even" style="top:808.25px"><span class="c c1">Luis Student</span><span class="c c2 q1">Year 1 Maths: Counting (QZ009)</span><span class="c c3 t1">Practice Test</span><span class="c c4">0</span><span class="c c5">5</span><span class="ic info"><svg viewBox="0 0 512 512" width="22" height="22" style=""><path fill="currentColor" d="M256 8C119.043 8 8 119.083 8 256c0 136.997 111.043 248 248 248s248-111.003 248-248C504 119.083 392.957 8 256 8zm0 110c23.196 0 42 18.804 42 42s-18.804 42-42 42-42-18.804-42-42 18.804-42 42-42zm56 254c0 6.627-5.373 12-12 12h-88c-6.627 0-12-5.373-12-12v-24c0-6.627 5.373-12 12-12h12v-64h-12c-6.627 0-12-5.373-12-12v-24c0-6.627 5.373-12 12-12h64c6.627 0 12 5.373 12 12v100h12c6.627 0 12 5.373 12 12v24z"/></svg></span><span class="ic uslash"><svg viewBox="0 0 640 512" width="27.5" height="22" style=""><path fill="currentColor" d="M633.8 458.1L362.3 248.3C412.1 230.7 448 183.800 448 128 448 57.300 390.700 0 320 0c-67.100 0-121.500 51.800-126.900 117.400L45.500 3.400C38.500-2 28.500-.8 23 6.200L3.400 31.400c-5.400 7-4.200 17 2.800 22.400l588.400 454.700c7 5.400 17 4.200 22.500-2.800l19.600-25.300c5.400-6.800 4.100-16.900-2.900-22.300zM96 422.400V464c0 26.500 21.500 48 48 48h350.200L207.400 290.300C144.200 301.300 96 356 96 422.400z"/></svg></span></div>
<div id="pager">
 <span class="pg first"><svg viewBox="0 0 16 16" width="16" height="16"><path d="M7.5 3L2.5 8l5 5M13.500 3l-5 5 5 5" fill="none" stroke="#3b8eea" stroke-width="2"/></svg></span>
 <span class="pg"><svg viewBox="0 0 16 16" width="16" height="16"><path d="M10.5 3l-5 5 5 5" fill="none" stroke="#3b8eea" stroke-width="2"/></svg></span>
 <span class="pg cur">1</span>
 <span class="pg">2</span>
 <span class="pg">3</span>
 <span class="pg"><svg viewBox="0 0 16 16" width="16" height="16"><path d="M5.5 3l5 5-5 5" fill="none" stroke="#007bff" stroke-width="2"/></svg></span>
 <span class="pg last"><svg viewBox="0 0 16 16" width="16" height="16"><path d="M2.5 3l5 5-5 5M8.500 3l5 5-5 5" fill="none" stroke="#007bff" stroke-width="2"/></svg></span>
</div>
<div class="rpp"><span>12</span><svg viewBox="0 0 21 12" width="21" height="12"><path d="M2 2l8.500 8 8.500-8" fill="none" stroke="#212529" stroke-width="2"/></svg></div>
</div>
<h1 id="title"><span class="w1">Subject:</span> <span class="w2">Matemáticas</span> I</h1>
<div id="header">
 <div class="logo1"><svg viewBox="0 0 48 48" width="48" height="48"><rect x="0" y="0" width="48" height="48" rx="9.500" fill="#fff"/><rect x="3" y="2.200" width="43" height="43.800" rx="7.500" fill="#97bc3f"/>
  <circle cx="20.600" cy="28.600" r="12" fill="none" stroke="#fff" stroke-width="3.500"/><circle cx="20.700" cy="28.600" r="7.200" fill="#fff"/>
  <path d="M23.400 32.300L29.800 40" stroke="#97bc3f" stroke-width="2.300" stroke-linecap="round"/><circle cx="23.400" cy="32.300" r="1.600" fill="#97bc3f"/>
  <circle cx="33.900" cy="14" r="8.200" fill="#fff"/><rect x="39" y="14" width="3.200" height="8.300" fill="#fff"/><path d="M42.200 20.500l.8 1.800h-.8z" fill="#fff"/>
  <circle cx="33.900" cy="13.900" r="5.100" fill="#97bc3f"/><circle cx="33.900" cy="13.800" r="2.200" fill="#fff"/></svg></div>
 <div class="logo2"><svg viewBox="0 0 44 42" width="44" height="42"><rect width="44" height="42" fill="#fdfdfd"/><rect x="1" y="1" width="42" height="40" fill="#f4f4f4"/><circle cx="21.900" cy="20.800" r="17.500" fill="none" stroke="#2a8fcb" stroke-width="2.100"/>
  <path d="M20.400 4.400h3.100v15.500c1.200.8 1.800 2 1.600 3.400-.3 2.500-2 5.500-3.100 8.400-1.200-2.900-2.900-5.900-3.200-8.400-.2-1.400.4-2.600 1.600-3.400z" fill="#fff200"/>
  <circle cx="21.950" cy="16.200" r="3" fill="#f7941d"/>
  <path d="M21.900 29.500c-3.200-2.500-5.600-6-5.900-10.900 3 1.800 5 5.500 5.900 10.900z" fill="#7b2b90"/><path d="M21.900 29.500c3.200-2.500 5.600-6 5.900-10.900-3 1.800-5 5.500-5.900 10.900z" fill="#7b2b90"/>
  <path d="M21.200 29.800c-4.500-.6-8.500-3.300-10.600-8.300 4.600.4 8.600 3.600 10.600 8.300z" fill="#e8274b"/><path d="M22.600 29.800c4.500-.6 8.500-3.300 10.600-8.300-4.600.4-8.600 3.600-10.600 8.300z" fill="#e8274b"/>
  <path d="M21.500 31.500c-4.600.8-9.600-.2-14-3.200 5-1.800 10.500-.8 14 3.200z" fill="#45b035"/><path d="M22.300 31.500c4.600.8 9.600-.2 14-3.200-5-1.800-10.500-.8-14 3.200z" fill="#45b035"/>
  <path d="M21.100 29.500h1.600l-.8 2.400z" fill="#fff200"/></svg></div>
 <div class="lang"><svg viewBox="0 0 20 20" width="19" height="19"><circle cx="10" cy="10" r="10" fill="#fff"/><g fill="none" stroke="#1a5fd0" stroke-width="1.100"><ellipse cx="10" cy="10" rx="3.800" ry="10"/><path d="M0 6.600h20M0 13.400h20"/></g></svg><span>en</span><i class="caret"></i></div>
 <div class="avatar"><svg viewBox="0 0 51 50" width="51" height="50"><ellipse cx="25.5" cy="25" rx="25.5" ry="25" fill="#fff"/>
  <path d="M11.500 43.500c-.5-4 .5-7.500 2-9 1.500-1.200 6-1.500 11-1.500h2c5 0 9.500.3 11 1.500 1.500 1.500 2.500 5 2 9-1.500.6-3.500 0-5-.5v2.500c-3 1.500-6.500 1.500-9 1.500s-6 0-9-1.500v-2.500c-1.500.5-3.500 1.100-5 .5z" fill="#fc6172"/>
  <path d="M11.500 43.500c-.5-4 .5-7.500 2-9 .8-.6 2-1 3.500-1.200-1 3-1 6.500-.5 9.700-1.500.5-3.500 1.100-5 .5zM39.500 43.500c.5-4-.5-7.500-2-9-.8-.6-2-1-3.500-1.200 1 3 1 6.500.5 9.700 1.500.5 3.500 1.100 5 .5z" fill="#ee5468"/>
  <path d="M20.800 28h9.300v5.200c0 2-2 3.600-4.650 3.600s-4.650-1.600-4.650-3.600z" fill="#f9c894"/>
  <ellipse cx="14.600" cy="20.500" rx="1.900" ry="2.400" fill="#f7cf9d"/><ellipse cx="37" cy="20.500" rx="1.900" ry="2.400" fill="#fcd9a5"/>
  <path d="M15 11h21.500v10.500c0 5-4.500 8.500-10.750 8.500S15 26.500 15 21.500z" fill="#fcd9a5"/>
  <path d="M15 13h3.200v13.500C16 25.500 15 23.500 15 21.500z" fill="#f7cf9d"/>
  <path d="M13.600 18.300c-1.600-3-1.600-6.500-.6-9.300 1.500-2.500 3.500-3.500 5.500-3.800C20.500 3.500 23 3 26 3c3 0 5.500.5 7.500 1.200 3 .8 5 2.500 5.500 4.800.6 3 .3 6.500-.8 9.300l-1.200.2c-.2-2-.6-3.700-1.500-5-4 .3-11 .6-15.500.5-2 .6-3.800 2.200-5 4.500z" fill="#8f603d"/>
  <path d="M19.500 5.200C23 4 29 4 33.500 4.200c3 .8 5 2.500 5.500 4.800.3 1.500.4 3 .3 4.500-4-4-12-6-19.800-8.300z" fill="#a47148" opacity=".7"/>
  <ellipse cx="20.200" cy="19.900" rx="1" ry="1.300" fill="#4d3227"/><ellipse cx="30.700" cy="19.900" rx="1" ry="1.300" fill="#4d3227"/>
  <path d="M22.100 24.600q3.500 2.600 7 0" fill="none" stroke="#f0b27c" stroke-width="1.100" stroke-linecap="round"/></svg></div>
 <div class="uname">Quizale Admin Demo<i class="caret"></i></div>
 <div class="urole">admin</div>
</div>
</body></html>
